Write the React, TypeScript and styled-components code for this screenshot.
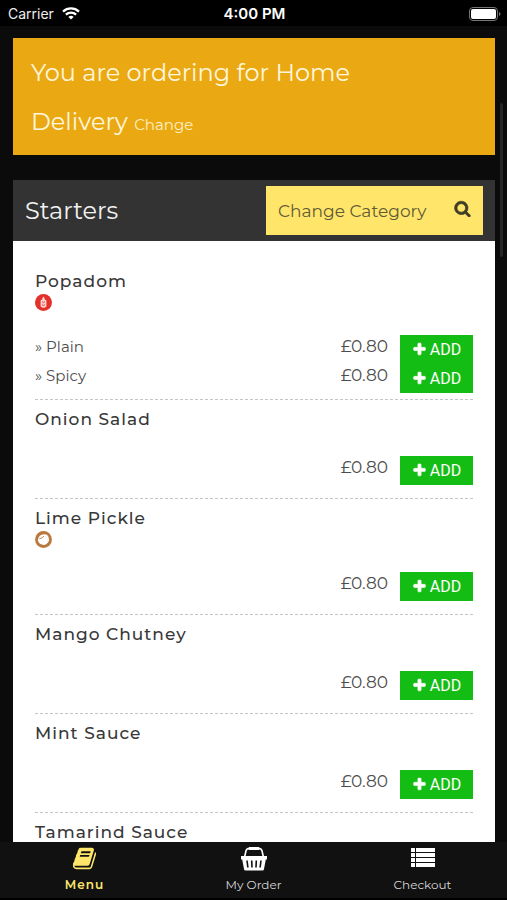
import React from "react";
import styled, { createGlobalStyle } from "styled-components";

const GlobalStyle = createGlobalStyle`
  *, *::before, *::after { box-sizing: border-box; }
  body { margin: 0; background: #0b0b0b; }
  body, button { font-family: Montserrat, Inter, "Open Sans", sans-serif; }
`;

const Screen = styled.div`
  position: relative;
  display: flex;
  flex-direction: column;
  height: 100vh;
  overflow: hidden;
  background: #0b0b0b;
`;

const StatusBar = styled.header`
  display: grid;
  grid-template-columns: 1fr auto 1fr;
  align-items: center;
  flex: none;
  height: 26px;
  padding: 1px 6px 0 8px;
  background: #000;
  color: #eee;
  font-family: Inter, Roboto, sans-serif;
  font-size: 14px;
`;

const Carrier = styled.div`
  display: flex;
  align-items: center;
  gap: 8px;
`;

const Clock = styled.time`
  color: #fff;
  font-size: 15px;
  font-weight: 600;
`;

const Battery = styled.svg`
  justify-self: end;
`;

const Content = styled.main`
  flex: 1;
  min-height: 0;
  overflow: hidden;
  padding: 12px 12px 0 13px;
`;

const Banner = styled.section`
  padding: 10px 18px 9px;
  background: #eaa913;
`;

const BannerText = styled.p`
  max-width: 360px;
  margin: 0;
  color: #fff6dc;
  font-size: 24px;
  font-weight: 400;
  line-height: 49px;
`;

const ChangeLink = styled.a`
  color: #fff0c4;
  font-size: 15px;
  line-height: 20px;
  text-decoration: none;
`;

const Card = styled.section`
  margin-top: 25px;
  background: #fff;
`;

const CardHeader = styled.div`
  display: flex;
  align-items: center;
  justify-content: space-between;
  height: 61px;
  padding: 0 12px;
  background: #333;
`;

const CardTitle = styled.h1`
  margin: 0;
  color: #f2f2f2;
  font-size: 24px;
  font-weight: 400;
`;

const CategoryButton = styled.button`
  display: flex;
  align-items: center;
  justify-content: space-between;
  width: 217px;
  height: 49px;
  padding: 0 12px;
  border: 0;
  background: #ffe66b;
  color: #5f5a35;
  font-size: 17px;

  svg {
    margin-bottom: 4px;
    color: #3f3c25;
  }
`;

const Menu = styled.ul`
  margin: 0;
  padding: 29px 22px 0;
  list-style: none;
`;

const MenuItem = styled.li`
  margin-bottom: 8px;
  padding-bottom: 6px;
  border-bottom: 1px dashed #c4c4c4;
`;

const ItemName = styled.h2`
  margin: 0;
  color: #383838;
  font-size: 17px;
  font-weight: 500;
  letter-spacing: 1px;
  line-height: 22px;
`;

const Allergen = styled.svg`
  display: block;
  margin: 2px 0 -2px;
`;

const Rows = styled.div<{ $single: boolean }>`
  padding: ${(p) => (p.$single ? "26px 0 7px" : "26px 0 0")};
`;

const Row = styled.div`
  display: flex;
  align-items: center;
  gap: 12px;
  color: #4d4d4d;
`;

const OptionName = styled.span`
  flex: 1;
  padding-bottom: 6px;
  font-size: 15px;
`;

const Price = styled.span`
  padding-bottom: 8px;
  font-size: 17px;
`;

const AddButton = styled.button`
  display: flex;
  align-items: center;
  justify-content: center;
  gap: 3px;
  width: 73px;
  height: 29px;
  padding: 0;
  border: 0;
  background: #13bd13;
  color: #fff;
  font-family: Roboto, "Open Sans", sans-serif;
  font-size: 16px;
`;

const TabBar = styled.nav`
  display: grid;
  grid-template-columns: repeat(3, 1fr);
  flex: none;
  height: 58px;
  border-bottom: 2px solid #000;
  background: #111;
`;

const Tab = styled.a<{ $active?: boolean }>`
  display: flex;
  flex-direction: column;
  align-items: center;
  gap: 4px;
  padding-top: 4px;
  color: ${(p) => (p.$active ? "#ffe66b" : "#d6d6d6")};
  font-size: 12px;
  font-weight: ${(p) => (p.$active ? 600 : 400)};
  letter-spacing: ${(p) => (p.$active ? "1px" : "normal")};
  line-height: 20px;
  text-decoration: none;
`;

const ScrollThumb = styled.div`
  position: absolute;
  top: 103px;
  right: 4px;
  width: 3px;
  height: 154px;
  border-radius: 2px;
  background: #252525;
`;

const PLUS =
  "M1600 736v192q0 40-28 68t-68 28h-416v416q0 40-28 68t-68 28h-192q-40 0-68-28t-28-68v-416h-416q-40 0-68-28t-28-68v-192q0-40 28-68t68-28h416v-416q0-40 28-68t68-28h192q40 0 68 28t28 68v416h416q40 0 68 28t28 68z";
const SEARCH =
  "M1216 832q0-185-131.5-316.5t-316.5-131.5-316.5 131.5-131.5 316.5 131.5 316.5 316.5 131.5 316.5-131.5 131.5-316.5zm512 832q0 52-38 90t-90 38q-54 0-90-38l-343-342q-179 124-399 124-143 0-273.5-55.5t-225-150-150-225-55.5-273.5 55.5-273.5 150-225 225-150 273.5-55.5 273.5 55.5 225 150 150 225 55.5 273.5q0 220-124 399l343 343q37 37 37 90z";
const BOOK =
  "M1703 478q40 57 18 129l-275 906q-19 64-76.5 107.5t-122.5 43.5h-923q-77 0-148.5-53.5t-99.5-131.5q-24-67-2-127 0-4 3-27t4-37q1-8-3-21.5t-3-19.5q2-11 8-21t16.5-23.5 16.5-23.5q23-38 45-91.5t30-91.5q3-10 .5-30t-.5-28q3-11 17-28t17-23q21-36 42-92t25-90q1-9-2.5-32t.5-28q4-13 22-30.5t22-22.5q19-26 42.5-84.5t27.5-96.5q1-8-3-25.5t-2-26.5q2-8 9-18t18-23 17-21q8-12 16.5-30.5t15-35 16-36 19.5-32 26.5-23.5 36-11.5 47.5 5.5l-1 3q38-9 51-9h761q74 0 114 56t18 130l-274 906q-36 119-71.5 153.5t-128.5 34.5h-869q-27 0-38 15-11 16-1 43 24 70 144 70h923q29 0 56-15.5t35-41.5l300-987q7-22 5-57 38 15 59 43zm-1064 2q-4 13 2 22.5t20 9.5h608q13 0 25.5-9.5t16.5-22.5l21-64q4-13-2-22.5t-20-9.5h-608q-13 0-25.5 9.5t-16.5 22.5zm-83 256q-4 13 2 22.5t20 9.5h608q13 0 25.5-9.5t16.5-22.5l21-64q4-13-2-22.5t-20-9.5h-608q-13 0-25.5 9.5t-16.5 22.5z";

const Glyph = ({ d, size, bold }: { d: string; size: number; bold?: boolean }) => (
  <svg
    width={size}
    height={size}
    viewBox="0 0 1792 1792"
    fill="currentColor"
    stroke="currentColor"
    strokeWidth={bold ? 70 : 0}
    aria-hidden="true"
  >
    <path d={d} />
  </svg>
);

const WifiIcon = () => (
  <svg width="18" height="13" viewBox="0 0 18 13" fill="none" stroke="#fff" strokeWidth="2.3" aria-hidden="true">
    <path d="M1 4.6C5.5.4 12.5.4 17 4.6" />
    <path d="M3.9 7.7C6.8 5 11.2 5 14.1 7.7" />
    <path d="M6.4 9.9C7.9 8.5 10.1 8.5 11.6 9.9L9 12.6Z" fill="#fff" stroke="none" />
  </svg>
);

const BasketIcon = () => (
  <svg width="26" height="25" viewBox="0 0 26 25" aria-hidden="true">
    <path d="M3.6 11 5 4.8Q5.800 2.200 8.500 2.200H17.500Q20.200 2.200 21 4.800L22.400 11" fill="none" stroke="#fff" strokeWidth="1.6" />
    <path d="M8 1H18L18.600 4H7.400Z" fill="#fff" />
    <path d="M0 10H26V13.500H24.800L23 23Q22.800 24.500 21.500 24.500H4.500Q3.200 24.500 3 23L1.200 13.500H0Z" fill="#fff" />
    <path d="M6 14.500 6.900 21.500M10.700 14.500 11 21.500M15.300 14.500 15 21.500M20 14.500 19.100 21.500" stroke="#111" strokeWidth="1.6" />
  </svg>
);

const ListIcon = () => (
  <svg width="24" height="25" viewBox="0 0 24 25" fill="#fff" aria-hidden="true">
    {[2, 7, 12, 17].map((y) => (
      <React.Fragment key={y}>
        <rect x="0" y={y} width="4" height="4" />
        <rect x="5" y={y} width="19" height="4" />
      </React.Fragment>
    ))}
  </svg>
);

const GlutenIcon = () => (
  <Allergen width="17" height="17" viewBox="0 0 17 17" role="img" aria-label="Contains gluten">
    <circle cx="8.5" cy="8.5" r="8.5" fill="#e3302b" />
    <path d="M8.5 2.500Q7 4 7.200 5.400L5.600 6.200V12.500L7.500 13.700H9.500L11.400 12.500V6.200L9.800 5.400Q10 4 8.500 2.500Z" fill="#ffd3d0" />
    <path d="M7 7.600 8.500 8.600 10 7.600M7 10.600 8.500 11.600 10 10.600" fill="none" stroke="#e3302b" strokeWidth="0.9" />
  </Allergen>
);

const NutIcon = () => (
  <Allergen width="17" height="17" viewBox="0 0 17 17" role="img" aria-label="Contains nuts">
    <circle cx="8.5" cy="8.5" r="8.4" fill="#b9783c" />
    <path d="M2.900 9.500Q2.900 6 6 4 9.500 2.600 12 3.800 14.400 6 14 9.200 13 13 9 14 4 13.600 2.900 9.500Z" fill="#fff" />
    <path d="M4.300 7.800Q7.500 7.500 9 5" fill="none" stroke="#c48d58" strokeWidth="1" />
  </Allergen>
);

type Item = { name: string; icon?: React.ReactNode; options?: string[] };

const ITEMS: Item[] = [
  { name: "Popadom", icon: <GlutenIcon />, options: ["Plain", "Spicy"] },
  { name: "Onion Salad" },
  { name: "Lime Pickle", icon: <NutIcon /> },
  { name: "Mango Chutney" },
  { name: "Mint Sauce" },
  { name: "Tamarind Sauce" },
];

const App = () => (
  <>
    <GlobalStyle />
    <Screen>
      <StatusBar>
        <Carrier>
          Carrier
          <WifiIcon />
        </Carrier>
        <Clock>4:00 PM</Clock>
        <Battery width="32" height="14" viewBox="0 0 32 14" aria-hidden="true">
          <rect x="0.5" y="0.5" width="28" height="13" rx="3.5" fill="none" stroke="#777" />
          <rect x="2" y="2" width="25" height="10" rx="2" fill="#fff" />
          <path d="M30 5Q31.5 5.5 31.5 7T30 9Z" fill="#777" />
        </Battery>
      </StatusBar>

      <Content>
        <Banner>
          <BannerText>
            You are ordering for Home Delivery <ChangeLink href="#change">Change</ChangeLink>
          </BannerText>
        </Banner>

        <Card>
          <CardHeader>
            <CardTitle>Starters</CardTitle>
            <CategoryButton type="button">
              Change Category
              <Glyph d={SEARCH} size={17} bold />
            </CategoryButton>
          </CardHeader>
          <Menu>
            {ITEMS.map(({ name, icon, options }) => (
              <MenuItem key={name}>
                <ItemName>{name}</ItemName>
                {icon}
                <Rows $single={!options}>
                  {(options ?? [""]).map((option) => (
                    <Row key={option}>
                      <OptionName>{option && `» ${option}`}</OptionName>
                      <Price>£0.80</Price>
                      <AddButton type="button" aria-label={`Add ${name} ${option}`.trim()}>
                        <Glyph d={PLUS} size={15} bold />
                        ADD
                      </AddButton>
                    </Row>
                  ))}
                </Rows>
              </MenuItem>
            ))}
          </Menu>
        </Card>
      </Content>

      <TabBar>
        <Tab href="#menu" $active>
          <Glyph d={BOOK} size={25} />
          Menu
        </Tab>
        <Tab href="#order">
          <BasketIcon />
          My Order
        </Tab>
        <Tab href="#checkout">
          <ListIcon />
          Checkout
        </Tab>
      </TabBar>
      <ScrollThumb />
    </Screen>
  </>
);

export default App;
